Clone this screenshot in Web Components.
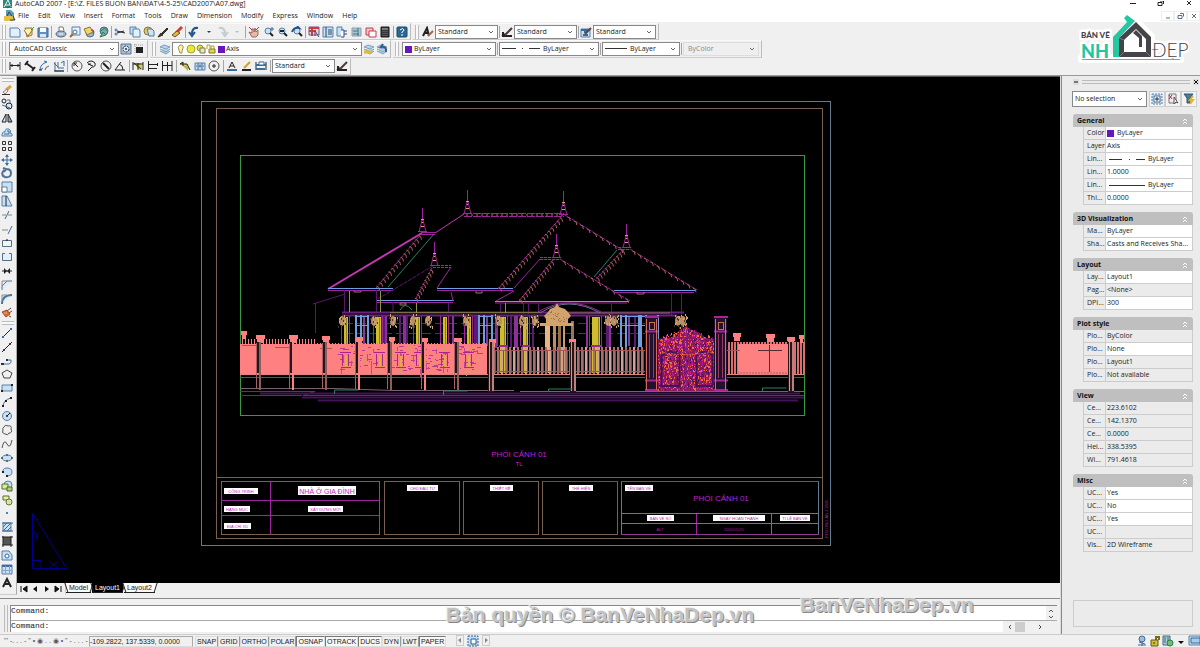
<!DOCTYPE html>
<html lang="vi">
<head>
<meta charset="utf-8">
<title>AutoCAD 2007 - A07.dwg</title>
<style>
html,body{margin:0;height:100%;background:#f0f0f0}
body{font:7px/9px "Open Sans","Noto Sans",sans-serif;color:#222}
</style>
</head>
<body>
<cad-app></cad-app>
<script>
const define=(name,css,html)=>customElements.define(name,class extends HTMLElement{
  connectedCallback(){
    if(this.shadowRoot)return;
    const root=this.attachShadow({mode:'open'});
    root.innerHTML=`<style>*{box-sizing:border-box}button{font:inherit;color:inherit;margin:0}svg{display:block}${css}</style>`+(typeof html==='function'?html(this):html);
  }
});

/* icon artwork on a 12 x 12 grid */
const B='stroke="#3f6b9c"',K='stroke="#222"',F='fill="#c9dff2" stroke="#5480ab"';
const lens=`<circle cx="6" cy="5" r="3" ${F}/><path d="M8 7l3 3" ${K} stroke-width="2"/>`;
const dimEnds=`<path d="M1 2v8M11 2v8" ${K}/>`;
const layers='<path d="M1 4l4-2 6 2-4 2zM1 6l6 3 4-3M1 8l6 3 4-3" fill="#b8d4ec" stroke="#7c9ebf"/>';
const ICON={
new:'<path d="M1 2h8l2 2v7H1z" fill="#e2f0fb" stroke="#5480ab"/>',
open:'<path d="M2 2h7v7l-5 2z" fill="#f0d98a" stroke="#9a7b30"/><path d="M1 4l4 6 5-7" fill="#fff3bd" stroke="#8b7336"/><path d="M8 4l3-3" stroke="#3c9a55"/>',
save:'<path d="M1 2h10v9H1z" fill="#5f91c4" stroke="#40658e"/><path d="M3 2h6v4H3z" fill="#fff"/><path d="M3 8h6v3H3z" fill="#dce8f4"/>',
print:'<path d="M4 5V1h4l1 4" fill="#fff" stroke="#777"/><ellipse cx="6" cy="8" rx="5" ry="3" fill="#9fb3cb" stroke="#52637d"/><path d="M4 8h4" stroke="#fff"/>',
preview:'<path d="M3 1h8v8H3z" fill="#e7f2fb" stroke="#5480ab"/><circle cx="6" cy="6" r="2" fill="#fff" stroke="#476b93"/><path d="M4 8l-3 3" stroke="#9a6a3a" stroke-width="2"/>',
publish:'<circle cx="7" cy="7" r="4" fill="#9cb9cf" stroke="#49708c"/><path d="M1 3l6-2 3 5-6 3z" fill="#eed66b" stroke="#8e7430"/><path d="M8 4l3 1-1 3" stroke="#bd4a45" fill="none"/>',
dwf:'<circle cx="7" cy="5" r="4" fill="#78a8c4" stroke="#416c8b"/><path d="M4 5q4-5 6 0M3 11l3-5 3 3z" fill="#73b184" stroke="#367b55"/>',
cut:`<path d="M3 5l8 2M3 7l7-2" ${K}/><circle cx="2" cy="4" r="1" fill="none" ${B}/><circle cx="2" cy="8" r="1" fill="none" ${B}/>`,
copy:`<path d="M1 1h6v7H1z" ${F}/><path d="M4 3h6l1 2v6H4z" fill="#e3f1fc" stroke="#5480ab"/>`,
paste:'<circle cx="5" cy="5" r="4" fill="#e5c968" stroke="#817342"/><path d="M4 3h5l2 2v5H6z" fill="#cfe3ef" stroke="#4b7c9d"/>',
match:'<path d="M1 11l3-4 2 2zM5 7l5-5 1 1-5 5z" fill="#4a3a31" stroke="#312923"/>',
editor:'<path d="M5 7l6-6" stroke="#c94139" stroke-width="3"/><path d="M1 9l5-4 3 2-5 4z" fill="#e2b83e" stroke="#725221"/>',
undo:'<path d="M10 2Q4 1 4 8M1 6l3 4 3-4" fill="none" stroke="#24558a" stroke-width="2"/>',
redo:'<path d="M2 2q6-1 6 6M5 6l3 4 3-4" fill="none" stroke="#c5cbd1" stroke-width="2"/>',
dot:'<path d="M4 5h4L6 7z" fill="#173b83"/>',dotg:'<path d="M4 5h4L6 7z" fill="#bbb"/>',arrow:'<path d="M3 6h6L6 9z" fill="#111"/>',
pan:'<path d="M4 11L1 6l3 1V3h2v3l1-4 1 4 2-2v5l-2 2z" fill="#e8b8a7" stroke="#986d6a"/><path d="M1 1l3 3M11 1L8 4" stroke="#b1323b"/>',
zoom:lens+'<path d="M10 1v4M8 3h4" stroke="#47698c"/>',
zoomw:lens+'<path d="M4 5h4" stroke="#222" stroke-width="2"/>',
zoomp:lens+'<path d="M1 6Q3 1 8 2L6 0" fill="none" stroke="#24558a" stroke-width="2"/>',
props:'<path d="M1 1h10v8H1z" fill="#e9dbe1" stroke="#765575"/><path d="M1 2h10M1 5h7M4 1v9" stroke="#c83d46" stroke-width="2"/><path d="M7 5l4 6M7 5v5" stroke="#344e82"/>',
center:`<path d="M1 1h10v10H1z" ${F}/><path d="M4 1v10M6 4h4M6 6h4M6 8h4" stroke="#274769"/>`,
palette:`<path d="M1 1h5v9H1z" ${F}/><path d="M5 4h3v7H5M8 5h3M8 8h3" stroke="#284e7d" fill="#fff"/>`,
sheet:'<path d="M2 2h9v8H2z" fill="#a9c9cf" stroke="#8aa0ad"/><path d="M3 5h5M3 8h6M8 2v8" stroke="#4c7186"/>',
markup:'<path d="M1 2h7v7H1z" fill="#f4c5c8" stroke="#c43c4b"/><path d="M4 5h7v6H4z" fill="#fff" stroke="#c43c4b"/>',
calc:'<path d="M2 1h8v10H2z" fill="#35383b" stroke="#191919"/><path d="M3 3h6" stroke="#adc8b4"/><path d="M4 5v5M6 5v5M8 5v5" stroke="#b55" stroke-dasharray="1"/>',
help:'<rect x="1" y="1" width="10" height="10" rx="1" fill="#296796" stroke="#184869"/><path d="M4 4q3-3 4 0 0 1-2 2v1M6 8v2" fill="none" stroke="#fff"/>',
text:'<path d="M1 10l4-8 2 8M3 7h3" fill="none" stroke="#222" stroke-width="2"/><path d="M6 10l5-5" stroke="#9a694d" stroke-width="2"/>',
dimstyle:'<path d="M1 10h10M1 10l3-2M2 6v4" stroke="#222" stroke-width="2"/><path d="M4 9l7-7" stroke="#4d3a34" stroke-width="2"/>',
tablestyle:`<path d="M1 3h9v8H1z" ${F}/><path d="M1 4h9M3 9h5M4 6h3" ${B} stroke-width="2"/><path d="M5 8l6-6" stroke="#5d4840" stroke-width="2"/>`,
gear:'<path d="M1 1h10v10H1z" fill="#a8c1dc" stroke="#5e7790"/><circle cx="6" cy="6" r="3" fill="#dce9f5" stroke="#333" stroke-dasharray="2 1"/><circle cx="6" cy="6" r="1" fill="#333"/>',
workspace:'<path d="M1 2h10M2 1v10" stroke="#999" stroke-dasharray="1"/><path d="M3 4h7v6H3z" fill="#222"/>',
layers,layerp:layers+'<path d="M1 9h7" stroke="#e3b92e" stroke-width="3"/>',layerb:layers+'<path d="M10 9Q11 3 5 4l2-3" fill="none" stroke="#315d92" stroke-width="2"/>',
bulb:'<path d="M4 7Q2 4 5 2q4 0 3 3L7 8v2H5z" fill="#fff6a3" stroke="#9b9156"/>',
sun:'<circle cx="6" cy="6" r="4" fill="#e9e83b" stroke="#a4a42f"/>',
vp:'<circle cx="5" cy="5" r="3" fill="#e7e33a" stroke="#908b33"/><path d="M5 5h5v5H5z" fill="#eee99a" stroke="#777"/>',
lock:'<path d="M2 6V2h3v3M6 6V3h3v4" fill="none" stroke="#aaa12b"/><path d="M4 6h6v4H4z" fill="#dfd452" stroke="#8a7a25"/>',
violet:'<path d="M3 3h7v7H3z" fill="#6616ba"/>',
dlin:dimEnds+`<path d="M1 5.500h10M3 4v3M9 4v3" fill="none" ${K}/>`,
dali:`<path d="M2 3l8 6M1 5l3-4M8 11l3-4" ${K} stroke-width="2"/>`,
darc:`<path d="M2 10Q2 4 9 2M2 10l3-2M9 2L6 1M7 10q0-3 4-4" fill="none" ${B} stroke-width="1"/><path d="M1 10h3" ${K}/>`,
dord:`<path d="M2 2v9h9M5 2v6h6M1 3l4 4M8 3l3-2v5" fill="none" ${B}/><path d="M1 11h10" ${K}/>`,
drad:`<circle cx="6" cy="6" r="5" fill="none" stroke="#555"/><path d="M3 3l4 4M3 6V3h3" ${K} fill="none"/>`,
djog:`<path d="M2 3q4-4 8 0 1 4-3 4l-4 4M6 4H3l5 2" fill="none" ${K}/>`,
ddia:`<circle cx="6" cy="6" r="5" fill="none" stroke="#555"/><path d="M3 3l6 6" ${K} stroke-width="2"/>`,
dang:`<path d="M11 10H1l6-8M5 4q4 1 4 6" fill="none" ${K}/>`,
dquick:'<path d="M2 3h7l2 7-5-1z" fill="#d2d03a"/>'+dimEnds+'<path d="M1 4h10M6 3v7M2 3l7 6" stroke="#222"/>',
dbase:`<path d="M1.500 1v10M2 4.500h8M2 8.500h8M10.500 3v3" fill="none" ${K}/>`,
dcont:`<path d="M1.500 1v10M6.500 2v9M11 1v10M1 5.500h10" ${K}/>`,
dlead:'<path d="M1 4h7l3 6M1 4l3-2v4" fill="#dec73b" stroke="#222"/><path d="M4 6l5 5V6z" fill="#b2b644"/>',
dtol:`<path d="M1 3h10v7H1z" ${F}/><path d="M4 3v7M8 3v7M2 6h1M9 6h1" ${B}/><circle cx="6" cy="6" r="1" ${B}/>`,
dcen:'<circle cx="6" cy="6" r="5" fill="none" stroke="#555"/><path d="M4 6h4M6 4v4" stroke="#222"/>',
dedit:`<path d="M1 10h10" ${B} stroke-width="2"/><path d="M3 8l3-6 3 6M4 6h4" fill="none" ${K}/>`,
dtedit:'<path d="M1 10h9" stroke="#222" stroke-width="2"/><path d="M3 8l6-6" stroke="#d79a28" stroke-width="2"/>',
dupd:dimEnds+`<path d="M1 5h10M1 9h9" ${B} stroke-width="2"/><path d="M4 2h5v3H4z" ${B} fill="#fff"/>`,
erase:'<path d="M5 6l5-4" stroke="#dba24d" stroke-width="3"/><path d="M2 8l4-3 1 2-3 3z" fill="#f4ede5" stroke="#a57a70"/><path d="M1 10.500h8" stroke="#333"/>',
ccopy:`<circle cx="3" cy="3" r="2" fill="none" ${K}/><circle cx="8" cy="8" r="3" fill="#dce8ef" ${K}/><path d="M6 2h3v3M1 7l8 3" fill="none" ${B}/>`,
mirror:`<path d="M1 10l4-8v8z" fill="#dbe7ee" ${K}/><path d="M11 10L7 2v8z" fill="#93a8bb" ${K}/>`,
offset:`<path d="M1 8q1-3 3-2 0-4 4-3 3 2 1 4l2 1v2H1z" ${F}/><path d="M3 8h5V5H6" fill="none" ${B}/>`,
array:'<path d="M1.500 1.500h3v3h-3zM7.500 1.500h3v3h-3zM1.500 7.500h3v3h-3zM7.500 7.500h3v3h-3z" fill="#f5f5f5" stroke="#333"/>',
move:`<path d="M6 1v10M1 6h10" ${B}/><path d="M6 0l2 3H4zM6 12l2-3H4zM0 6l3-2v4zM12 6L9 4v4z" fill="#3f6b9c"/>`,
rotate:'<path d="M3 3q-4 5 1 7 6 1 6-4 0-4-5-4M2 1l3 1-2 3" fill="none" stroke="#4d7198" stroke-width="2"/>',
scale:`<path d="M1 1h10v10H1z" ${F}/><path d="M1 6h5v5H1z" fill="#fff" stroke="#638097"/>`,
stretch:`<path d="M1 1h5l5 10H1z" ${F}/><path d="M5 1v10" ${K}/>`,
trim:`<path d="M1 6h4M7 6h4" stroke="#888"/><path d="M4 10l4-8" ${B}/>`,extend:`<path d="M1 7h6" stroke="#888"/><path d="M7 11l4-8" ${B}/>`,
breakp:'<path d="M1.500 3.500h9v6h-9z" fill="#f4f4f0" stroke="#566f88"/><path d="M6 2v2" stroke="#111"/>',brk:'<path d="M4 2.500H1.500v7h9v-7H8" fill="#e6eff7" stroke="#566f88"/>',
join:'<path d="M1 6h10" stroke="#222"/><path d="M3 3l3 3-3 3zM9 3L6 6l3 3z" fill="#222"/>',
chamfer:'<path d="M1 11V7l5-5h5" fill="#dcebf7" stroke="#4b759f"/><path d="M1 7V2h5" fill="none" stroke="#888"/>',
fillet:'<path d="M1 11Q1 2 11 2" fill="#dcebf7" stroke="#4b759f" stroke-width="2"/><path d="M1 7V2h5" fill="none" stroke="#888"/>',
explode:'<path d="M1 5l5-2 3 4-4 3z" fill="#d2703a" stroke="#b54731"/><path d="M6 4l4-3M8 6l3-2M8 9l2 1" stroke="#8a3c27"/><path d="M3 6h3" stroke="#f0b05a"/>',
line:`<path d="M2 10l8-8" ${K}/><path d="M1 10h2M9 2h2" ${B} stroke-width="2"/>`,xline:`<path d="M1 11L11 1" ${K}/><circle cx="3" cy="9" r="1" fill="#222"/><circle cx="9" cy="3" r="1" fill="#222"/>`,
pline:'<path d="M1 9h7q3-1 2-4H6M1 8v2" fill="none" stroke="#47719b"/><path d="M0 9h3M5 5h2" stroke="#234" stroke-width="2"/>',
polygon:'<path d="M6 2l5 3-2 5H3L1 5z" fill="#eef0f1" stroke="#454545"/>',rect:`<path d="M1 3h10v6H1z" ${F}/><path d="M1 8v2M11 2v2" ${K} stroke-width="2"/>`,
arc:`<path d="M2 11Q2 4 10 2" fill="none" ${B}/><path d="M1 10h2M4 5h2M9 2h2" ${K} stroke-width="2"/>`,
circle:`<circle cx="6" cy="6" r="4.500" ${F}/><path d="M6 6l3-3" ${K}/><circle cx="6" cy="6" r="1" fill="#222"/>`,
cloud:'<path d="M3 3q1-3 4-1 4-1 3 3 2 4-2 4-1 3-4 1-4-1-2-4-1-2 1-3z" fill="#f0f0f0" stroke="#555"/>',
spline:'<path d="M1 10Q3 0 6 6t5-4" fill="none" stroke="#555"/>',ellipse:`<ellipse cx="6" cy="6" rx="5" ry="3" ${F}/><path d="M6 2v2M6 8v2M1 5v2M11 5v2" ${K}/>`,
earc:`<path d="M2 7Q1 2 6 2t5 4-5 4" ${F}/><path d="M1 6h2M5 10h2" ${K} stroke-width="2"/>`,
insert:'<circle cx="7" cy="5" r="4" fill="#cfe0ed" stroke="#5480ab"/><path d="M1 4h6v5H1z" fill="#dce99d" stroke="#55752e"/><path d="M6 7h5v4H6z" fill="#b3cd7b" stroke="#48682b"/>',
block:'<path d="M2 2h6v4H2z" fill="#e9edac" stroke="#58702b"/><circle cx="8" cy="8" r="3" fill="#d9e5a4" stroke="#56783d"/>',
point:'<circle cx="6" cy="6" r="1" fill="#245b8b"/>',hatch:`<path d="M2 2h8v8H2z" ${F}/><path d="M2 6l4-4M2 10l8-8M6 10l4-4M1 2h11M1 10h11" ${B}/>`,
gradient:'<path d="M2 2h8v8H2z" fill="#555"/><path d="M1 2h11M1 10h11M2 1v11M10 1v11" stroke="#222"/>',
region:`<path d="M1 2h7l3 4v5H1z" ${F}/><circle cx="6" cy="7" r="2" fill="#f8f8f8" ${B}/>`,
table:`<path d="M1 2h10v9H1z" ${F}/><path d="M1 3h10" ${B} stroke-width="2"/><path d="M1 7.500h10M4.500 3v8M8.500 3v8" stroke="#82a5cb"/>`,
mtext:'<path d="M2 10l4-8 4 8M4 7h4" fill="none" stroke="#222" stroke-width="2"/>',
first:'<path d="M4 3v6M10 3v6L6 6z" fill="#111" stroke="#111"/>',prev:'<path d="M8 3v6L4 6z" fill="#111"/>',next:'<path d="M4 3v6l4-3z" fill="#111"/>',last:'<path d="M8 3v6M2 3v6l4-3z" fill="#111" stroke="#111"/>',
qplus:`<path d="M1 1h10v10H1z" ${F} stroke-dasharray="2 1"/><path d="M3 3h6v6H3z" fill="#fff" ${B}/><path d="M6 4v4M4 6h4" ${K}/>`,
qsel:'<path d="M2 1h7v9H2z" fill="#eee" stroke="#777"/><path d="M2 2l3 4M5 2L2 6" stroke="#b82a3e"/><path d="M7 4v7l2-2 2 1z" fill="#fff" stroke="#555"/>',
qfilter:'<path d="M1 1h9L7 5v5H4V5z" fill="#447aa4" stroke="#315470"/><path d="M10 3L7 7h3l-3 4" fill="none" stroke="#e3b529" stroke-width="2"/>',
app:'<path d="M1 0h9v8H1z" fill="#2d8a78"/><path d="M2 7l4-7 3 7M3 5h5" fill="none" stroke="#e7f6ee"/><path d="M5 8l5-3" stroke="#28567a"/>',
dwg:'<path d="M2 0h5l3 3v7H2z" fill="#5d9cbd"/><path d="M0 6h9v5H0z" fill="#e1c247"/><path d="M3 6l2-4 3 4M9 6l2 4H6" fill="none" stroke="#344"/>',
comm:'<circle cx="6" cy="4" r="3" fill="#9ebddc" stroke="#436b98"/><path d="M2 10h8M6 6v5M3 7l6 2" stroke="#466b9a"/>',
unlock:'<path d="M7 6V2h3v3" fill="none" stroke="#786c1c" stroke-width="2"/><path d="M2 5h7v6H2z" fill="#d1be31" stroke="#63591b"/><path d="M5 7v2" stroke="#333"/>',
trusted:'<path d="M1 1h7v9H1z" fill="#b3cfdf" stroke="#3e6978"/><circle cx="8" cy="8" r="3" fill="#74bd72" stroke="#298041"/><path d="M3 2v6M6 2v4" stroke="#367"/>',
screen:`<path d="M1 1h11v9H1z" ${F}/><path d="M3 3h9v5H3z" fill="#a8cdec" ${B}/>`,
maxvp:'<path d="M1 1h10v10H1z" fill="#c1dff5" stroke="#345f8b" stroke-dasharray="2 1"/><path d="M4 4h5v5H4z" fill="#fff" stroke="#24588d"/>'
};
define('cad-icon',':host{display:block;flex:none;width:12px;height:12px}',el=>`<svg width="12" height="12" viewBox="0 0 12 12" fill="none" aria-hidden="true">${ICON[el.getAttribute('name')]||''}</svg>`);
define('cad-tool',':host{display:block;flex:none}button{display:block;border:0;padding:0;background:none}',el=>`<button type="button" aria-label="${el.getAttribute('name')}"><cad-icon name="${el.getAttribute('name')}"></cad-icon></button>`);
define('cad-sep',':host{display:block;flex:none;width:1px;height:12px;background:#a5a5a5}','');
define('cad-group',':host{display:flex;align-items:center;justify-content:space-between;flex:none}','<slot></slot>');
define('cad-toolbar',':host{display:flex;align-items:center;padding:0 2px;border-right:1px solid #bbb;border-bottom:1px solid #ccc;border-top:1px solid #fafafa}i{flex:none;width:4px;height:14px;margin-right:3px;border:solid #bbb;border-width:0 1px;background:#fafafa}div{display:flex;align-items:center;gap:1px}','<i></i><div><slot></slot></div>');

/* drop-down with an optional swatch or line sample before its value */
define('cad-select',`:host{display:block;position:relative;flex:none;height:14px;font-size:7px}
select{appearance:none;display:block;width:100%;height:100%;margin:0;padding:0 10px 0 var(--pad,4px);border:1px solid #888;border-radius:0;background:#fff;color:#222;font:inherit;line-height:12px;opacity:1}
:host([off]) select{color:#888;background:#efefef;border-color:#ddd}
svg{position:absolute;right:3px;top:50%;margin-top:-2px;pointer-events:none}
span{position:absolute;left:3px;top:0;bottom:0;display:flex;align-items:center;pointer-events:none}`,
el=>`<select aria-label="${el.getAttribute('label')}" ${el.hasAttribute('off')?'disabled':''}><option>${el.getAttribute('value')}</option></select><span><slot></slot></span><svg width="7" height="5" fill="none" stroke="#666"><path d="M1 1l2 2 2-2"/></svg>`);

const tools=s=>s.split(' ').map(n=>n==='|'?'<cad-sep></cad-sep>':`<cad-tool name="${n}"></cad-tool>`).join('');

define('cad-title',`:host{display:flex;justify-content:space-between;height:10px;background:#fff;overflow:hidden;line-height:7px;font-size:7px}
div{display:flex;gap:1px;padding-left:2px}.w{gap:16px;padding-right:5px}button{border:0;background:none;padding:0}`,
`<div><cad-icon name="app"></cad-icon><span>AutoCAD 2007 - [E:\\Z. FILES BUON BAN\\ĐAT\\4-5-25\\CAD2007\\A07.dwg]</span></div>
<div class="w"><button aria-label="Minimize"><svg width="12" height="8" stroke="#222"><path d="M3 2.500h6"/></svg></button><button aria-label="Restore"><svg width="12" height="8" stroke="#222" fill="none"><path d="M3 1.500h4v3H3zM5 0h3.500v3"/></svg></button><button aria-label="Close"><svg width="12" height="8" stroke="#222"><path d="M4 0l4 4M8 0L4 4"/></svg></button></div>`);

define('cad-menu',`:host{display:flex;justify-content:space-between;height:12px;background:#fff;line-height:12px}
nav{display:flex;padding-left:4px}a{color:#222;text-decoration:none;margin-right:9px}cad-icon{margin-right:2px}
div{display:flex}button{width:13px;height:10px;margin-top:1px;padding:0;border:1px solid #eee;background:#fff}`,
`<nav><cad-icon name="dwg"></cad-icon>${'File Edit View Insert Format Tools Draw Dimension Modify Express Window Help'.split(' ').map(t=>`<a href="#">${t}</a>`).join('')}</nav>
<div><button aria-label="Minimize drawing"><svg width="11" height="8" stroke="#56728d"><path d="M4 6h4"/></svg></button><button aria-label="Restore drawing"><svg width="11" height="8" stroke="#56728d" fill="none"><path d="M3 3.500h4v3H3zM5 1.500h3.500v3"/></svg></button><button aria-label="Close drawing"><svg width="11" height="8" stroke="#56728d"><path d="M4 2l4 4M8 2L4 6"/></svg></button></div>`);

define('cad-toolbars',`:host{display:grid;grid-auto-rows:minmax(0,1fr);box-sizing:border-box;height:54px;padding-top:1px;background:#f0f0f0;border-bottom:1px solid #999}
.r{display:flex;gap:2px}.std{width:63px;--pad:2px}.layer cad-icon{margin-right:-2px}`,
`<div class="r"><cad-toolbar><cad-group style="width:399px">${tools('new open save | print preview publish dwf | cut copy paste match editor | undo dot redo dotg | pan zoom zoomw zoomp | props center palette sheet markup calc | help')}</cad-group></cad-toolbar>
<cad-toolbar><cad-tool name="text"></cad-tool><cad-select class="std" label="Text style" value="Standard"></cad-select><cad-sep></cad-sep><cad-tool name="dimstyle"></cad-tool><cad-select class="std" label="Dimension style" value="Standard"></cad-select><cad-sep></cad-sep><cad-tool name="tablestyle"></cad-tool><cad-select class="std" label="Table style" value="Standard"></cad-select></cad-toolbar></div>
<div class="r"><cad-toolbar><cad-select style="width:110px" label="Workspace" value="AutoCAD Classic"></cad-select><cad-tool name="gear"></cad-tool><cad-tool name="workspace"></cad-tool></cad-toolbar>
<cad-toolbar><cad-tool name="layers"></cad-tool><cad-select class="layer" style="width:190px;--pad:53px" label="Layer" value="Axis"><cad-icon name="bulb"></cad-icon><cad-icon name="sun"></cad-icon><cad-icon name="vp"></cad-icon><cad-icon name="lock"></cad-icon><cad-icon name="violet"></cad-icon></cad-select><cad-tool name="layerp"></cad-tool><cad-tool name="layerb"></cad-tool></cad-toolbar>
<cad-toolbar><cad-select style="width:94px;--pad:11px" label="Color" value="ByLayer"><svg width="8" height="8"><path d="M0 1h7v7H0z" fill="#6616ba"/></svg></cad-select><cad-sep></cad-sep><cad-select style="width:100px;--pad:43px" label="Linetype" value="ByLayer"><svg width="40" height="3" stroke="#333"><path d="M0 1.500h14M20 1.500h1M27 1.500h11"/></svg></cad-select><cad-sep></cad-sep><cad-select style="width:78px;--pad:27px" label="Lineweight" value="ByLayer"><svg width="24" height="3" stroke="#333"><path d="M0 1.500h22"/></svg></cad-select><cad-sep></cad-sep><cad-select off style="width:76px" label="Plot style" value="ByColor"></cad-select></cad-toolbar></div>
<div class="r"><cad-toolbar><cad-group style="width:262px">${tools('dlin dali darc dord | drad djog ddia dang | dquick dbase dcont | dlead dtol dcen | dedit dtedit dupd |')}</cad-group><cad-select class="std" label="Current dimension style" value="Standard"></cad-select><cad-tool name="dimstyle"></cad-tool></cad-toolbar></div>`);

define('cad-strip',`:host{display:flex;flex-direction:column;box-sizing:border-box;width:17px;flex:none;padding-bottom:5px;background:#f0f0f0;border-right:1px solid #aaa;border-bottom:1px solid #ccc}
div{display:flex;flex-direction:column;align-items:center;justify-content:space-between;padding-right:2px}
.a{flex:17}.b{flex:19}i{flex:none;height:4px;margin:2px;border:solid #bbb;border-width:1px 0;background:#fafafa}`,
`<i></i><div class="a">${tools('erase ccopy mirror offset array move rotate scale stretch trim extend breakp brk join chamfer fillet explode')}</div><i></i><div class="b">${tools('line xline pline polygon rect arc circle cloud spline ellipse earc insert block point hatch gradient region table mtext')}</div>`);

/* ---- the sheet in the drawing area ---- */
function sheet(){
  let seed=7;const rnd=()=>(seed=(seed*16807)%2147483647)/2147483647;
  const P=(d,c,w=1,x='')=>`<path d="${d}" stroke="${c}" stroke-width="${w}" fill="none" ${x}/>`;
  const R=(x,y,w,h,c)=>`<rect x="${x}" y="${y}" width="${w}" height="${h}" fill="${c}"/>`;
  const O=(x,y,w,h,c)=>`<rect x="${x+.5}" y="${y+.5}" width="${w}" height="${h}" fill="none" stroke="${c}"/>`;
  const T=(x,y,s,t,c='#c223c8',a='start')=>`<text x="${x}" y="${y}" font-size="${s}" fill="${c}" text-anchor="${a}">${t}</text>`;
  const mg='#a0249c',pu='#5c1670',br='#77604f',sl='#617a92',sa='#ff8080',ye='#d0bc2c',ta='#d2a36d',bl='#6f9fe0',gr='#2a8068';
  const tiles=(x1,y1,x2,y2,n)=>{let d='';for(let i=0;i<n;i++){const t=(i+.5)/n,x=x1+(x2-x1)*t,y=y1+(y2-y1)*t;d+=`M${x-1} ${y}q3 0 3 4`}
    return P(`M${x1} ${y1}L${x2} ${y2}`,mg,1,'stroke-dasharray="3 1"')+P(d,'#b0605c',1)};
  const spire=(x,y)=>P(`M${x+.5} ${y-24}v13`,mg)+P(`M${x-1} ${y-12.5}h3M${x-1} ${y-9.500}h3M${x-1} ${y-5.500}h3`,ta)+P(`M${x} ${y-12}l-2 8-1 4M${x+1} ${y-12}l2 8 1 4M${x-4} ${y-.5}h9`,mg);
  let g='';
  g+=O(201,101,629,444,sl)+O(216,108,606,430,br)+O(240,155,564,260,'#389a40');
  /* roofs */
  g+=P('M328 289L422 233','#c237ae',2)+P('M421 232.500h14M421 234.500h14',mg)+P('M435 233L464 214','#c237ae',1)+P('M464 213.500h100M464 216.500h100',mg,1,'stroke-dasharray="8 1"')+P('M466 215h98','#c06c5c',1,'stroke-dasharray="2 3"');
  g+=tiles(421,234,376,288,15)+P('M434 234L388 287',gr)+P('M328 288.500h65M376 300.500h78M437 288.500h76M495 301.500h134M614 290.500h82',bl)+P('M328 290.500h65M377 302.500h76M437 290.500h76M495 303h132M614 292.500h80',mg);
  g+=P('M433 266L376 300',pu,1,'stroke-dasharray="4 1"')+P('M433 265.500h18M433 267.500h18',mg,1,'stroke-dasharray="3 1"')+tiles(432,268,415,300,9)+P('M451 267L437 288M451 292l2 9',mg);
  g+=tiles(562,216,498,289,22)+tiles(565,215,624,251,9)+P('M540 257.500h20M540 259.500h20M618 247.500h12M618 249.500h12',mg,1,'stroke-dasharray="3 1"')+P('M540 259l-26 29M514 291l-18 10',mg)+tiles(553,260,519,301,13)+tiles(560,259,630,301,10)+P('M617 250l-23 27',gr)+tiles(624,249,596,279,10)+tiles(630,249,697,290,11);
  [[422,232],[467,214],[434,266],[563,215],[556,258],[626,248]].forEach(a=>g+=spire(...a));
  g+=P('M354 291v1h7v-1M476 291v2h6v-2M637 292v2h7v-2M400 303h6v2h-6z','#9a7660');
  /* wall behind the columns */
  g+=P('M313 304l32-10M315.500 303v30M344.500 290v23M376.500 290v23M380.500 290v12M393 302v10M448.500 303v9M500.500 303v10M505.500 303v10M523.500 304v10M528.500 304v10M538.500 303v10M611.500 304v10M671.500 292v24M681.500 292v24',pu)+P('M342 312.500h342M342 315.500h335','#6b2180',2)+P('M390 312.500h150M560 313h110','#7c7048')+P('M349.500 291v21M380.500 291v21M416.500 303v10M505.500 303v10','#8f9640')+P('M540 313q28-18 60 0',sl)+P('M538 312q30-18 63 0',mg)+P('M400 310q5-9 12 0',gr);
  for(let x=344;x<650;x+=13)g+=P(`M${x} 323.500h9M${x} 333.500h9`,'#33404f');
  [381,385,399,403,406,452,474,495,510,514,532,586,606,609,634].forEach((x,i)=>g+=R(x,316,i%3?2:4,32,i%2?'#8d3099':'#5b1a70'));
  [[344,4],[376,5],[416,4],[443,4],[467,4],[500,6],[523,5],[592,8]].forEach(a=>g+=R(a[0],317,a[1],56,ye)+R(a[0]+a[1]-2,318,1,28,'#8d7b22')+R(a[0]-1,345,a[1]+2,2,mg)+P(`M${a[0]-2.5} 316v30M${a[0]+a[1]+1.5} 316v57`,mg));
  [[355,13],[478,14],[620,19],[640,18]].forEach(a=>{[0,5,a[1]-1].forEach(o=>g+=R(a[0]+o,315,2,32,bl));g+=R(a[0]+8,316,2,30,'#7f3e98')+P(`M${a[0]} 316.500h${a[1]}M${a[0]} 325.500h${a[1]}`,bl)});
  [342,374,393,413,428,466,499,522,535,608,614,678,683].forEach(x=>{g+=`<ellipse cx="${x}" cy="321" rx="3" ry="5" fill="#b98d63"/>`;for(let i=0;i<18;i++)g+=R(Math.round(x-4+rnd()*8),Math.round(314+rnd()*13),1,2,i%3?ta:'#4b3728')});
  g+=R(545,324,5,49,'#eab67f')+R(553,324,3,49,'#c18b63')+R(558,322,3,51,'#987048')+R(563,322,2,51,'#c79a70')+R(571,321,3,52,'#9b7264')+R(540,323,33,3,ta)+`<path d="M546 325v-6l-2-3 4-4 2-3 5-2 2-4 2 4 6 2 3 3 3 4-3 3v6l-12-1z" fill="${ta}"/>`;
  for(let i=0;i<26;i++)g+=R(Math.round(547+rnd()*20),Math.round(311+rnd()*12),1,1,'#9d744a');
  /* fence: solid panels, open pickets, piers */
  g+=R(240,344,247,30,sa)+R(738,344,50,30,sa);
  for(let x=242;x<490;x+=3)g+=R(x,x<315?339:343,1,5,sa);
  for(let x=728;x<804;x+=3)g+=R(x,342,2,32,'#d96f70');
  for(let x=489;x<646;x+=4)g+=R(x,347,2,27,x%3?'#a76d70':'#d0a09b')+R(x+2,350,1,23,'#7a4662');
  g+=R(738,344,50,28,sa);
  g+=P('M489 350.500h156M489 371.500h156M727 350.500h13M242 345.500h18M275 347.500h16M320 348.500h12','#a4555a');
  for(let i=0;i<170;i++){const x=Math.round(338+rnd()*142),y=Math.round(345+rnd()*25);g+=rnd()>.5?R(x,y,1+Math.round(rnd()*5),1,'#bc3c94'):R(x,y,1,2+Math.round(rnd()*6),rnd()>.4?'#d99a66':'#bd48a0')}
  [345,379,400,419,444,468].forEach(x=>g+=P(`M${x-5} 352.500h11M${x-4} 367.500h10M${x-2.5} 354v12M${x+3.500} 354v12`,'#aa268d')+R(x,356,2,11,'#d8b23c'));
  g+=P('M240 374.500h407M727 374.500h77','#e18480')+P('M240 377.500h407M727 377.500h77','#7d4b3d')+P('M240 388.500h94l60 2h120M520 391.500h284','#7a6073');
  [[241,6,331],[256,9,335],[289,9,335],[322,8,336],[356,7,337],[389,6,337],[422,6,338],[454,8,338],[489,7,339],[569,7,339],[733,8,333],[766,9,334],[787,8,337],[799,5,335]].forEach(([x,w,y])=>g+=R(x,y,w,4,sa)+R(x+1,y+4,w-2,4,sa));
  [257,290,323,356,388,422,455].forEach((x,i)=>g+=R(x,342,2,31,'#241621')+R(x+2,342,2,48,i%2?sa:'#925c5b')+R(x-1,343,1,46,'#a86160'));
  [488,570,788].forEach(x=>g+=R(x,342,6,50,'#2a1519')+R(x+1,342,1,49,sa)+R(x+4,342,2,49,'#bd8179'));
  g+=P('M769.500 345v27M758 350.500h24','#542d33');
  /* ground */
  g+=P('M240 391.500h75l-12 4h501M242 395.500h60','#6c2a7c')+P('M260 393.500h540M302 397.500h502M318 400.500h480','#45115a',2)+P('M334.500 394v-4h24M443.500 395v-4h24M548.500 392v-3h24M762.500 391v-3h24',gr);
  /* gate */
  [645,714].forEach(x=>g+=R(x,318,13,73,'#27102c')+P(`M${x} 317h14M${x} 331.500h13M${x} 380.500h14M${x} 390h14`,'#a52497',2)+P(`M${x+1.5} 319v71M${x+11.500} 319v71`,'#d46b5f')+O(x+4,322,5,7,'#c27448')+P(`M${x+4.5} 334v44M${x+8.500} 334v44`,'#923f65'));
  g+=`<path d="M658 339l14-2 8-7 6-4 5 4 7 2 8 6 8 1v52h-56z" fill="#8c1a5a"/>`;
  for(let i=0;i<1300;i++){const x=Math.round(658+rnd()*55),c=Math.abs(x-686),y0=327+c*.36,y=Math.round(y0+rnd()*(389-y0));g+=R(x,y,1,1+Math.round(rnd()),['#cf227d','#ee6638','#b71c91','#ef7046','#471068'][Math.floor(rnd()*5)])}
  g+=P('M661.500 386v-30q9-8 18-1v31zM696.500 386v-30q9-8 16 0v30z','#45115a',2)+P('M686.500 330v60M689.500 334v56','#8c1c84')+P('M659 352q25 5 54 0','#e4664a',1,'stroke-dasharray="2 1"');
  g+=T(519,457,8,'PHỐI CẢNH 01',undefined,'middle')+T(519,466,6,'TL',undefined,'middle');
  /* title block */
  g+=P('M216 477.500h606',br)+O(221,481,158,53,br)+O(384,481,75,53,br)+O(463,481,75,53,br)+O(542,481,75,53,br)+O(621,481,197,53,'#8e3b92')+P('M542 481.500h76',mg)+P('M270.500 482v52M221 500.500h158M221 515.500h158M696.500 513v21',mg)+P('M621.500 482v52M622 513.500h196M622 523.500h196M771.500 514v20M818.500 482v52',sl);
  const L=(x,y,w,h,s,t)=>R(x,y,w,h,'#fff')+T(x+w/2,y+h-1,s,t,'#b728b4','middle');
  g+=L(224,488,34,6,4,'CÔNG TRÌNH')+L(224,506,26,6,4,'HẠNG MỤC')+L(224,523,27,6,4,'ĐỊA CHỈ XD')+L(298,486,58,9,7,'NHÀ Ở GIA ĐÌNH')+L(308,506,35,6,4,'XÂY DỰNG MỚI')+L(407,485,31,6,4,'CHỦ ĐẦU TƯ')+L(490,485,23,6,4,'THIẾT KẾ')+L(569,485,24,6,4,'THỂ HIỆN')+L(625,485,28,6,4,'TÊN BẢN VẼ')+L(647,515,27,6,4,'BẢN VẼ SỐ')+L(713,515,52,6,4,'NGÀY HOÀN THÀNH')+L(780,515,30,6,4,'TỈ LỆ BẢN VẼ');
  g+=T(721,501,8,'PHỐI CẢNH 01',undefined,'middle')+T(660,531,4,'A07',mg,'middle')+T(734,531,4,'20/05/2025',mg,'middle')+`<text transform="translate(828 538) rotate(-90)" font-size="4" fill="${mg}">PHƯƠNG ÁN 2 2025</text>`;
  /* paper-space axes */
  g+=P('M32.500 513v55.500h34zM33 560.500h8v8M49 561l9 7M58 561l-9 7M34 532l2 3 2-3M36.500 535v4','#00008c');
  return g;
}
define('cad-drawing',':host{display:block;flex:1;min-height:0;background:#000;position:relative;border-top:1px solid #555}svg{position:absolute;inset:0;width:100%;height:100%}text{font-family:"Liberation Sans",Arial,sans-serif}',()=>`<svg viewBox="17 77 1043 506">${sheet()}</svg>`);

define('cad-tabs',`:host{display:flex;align-items:stretch;height:12px;flex:none;background:#f0f0f0;font:7px/10px "Liberation Sans",Arial,sans-serif}
div{display:flex;border-right:1px solid #ccc}
nav{display:flex}a{position:relative;color:#222;text-decoration:none;height:10px;padding:0 3px;margin-right:1px;border-bottom:1px solid #222;background:#fafafa}
a::before,a::after{content:"";position:absolute;right:-1px;top:0;height:10px;border-right:1px solid #222;transform:skewX(-18deg)}a::before{right:auto;left:0;transform:skewX(18deg)}a[aria-current]{background:#000;color:#fff}`,
`<div>${tools('first prev next last')}</div><nav><a href="#">Model</a><a href="#" aria-current="page">Layout1</a><a href="#">Layout2</a></nav>`);

define('cad-command',`:host{display:flex;box-sizing:border-box;flex:none;height:39px;padding:10px 3px 2px 4px;background:linear-gradient(#f0f0f0 3px,#888 3px,#888 4px,#f0f0f0 4px)}
i{width:4px;border:solid #bbb;border-width:0 1px;margin-right:2px}
section{flex:1;display:grid;grid-template-rows:14px 12px;border:solid #888;border-width:1px 0 0 1px;background:#fff}
.row{display:flex;min-width:0;align-items:flex-start;font:8px/10px "Liberation Mono","Courier New",monospace}.row+.row{border-top:1px solid #aaa}
label{flex:none}input{flex:1;min-width:0;height:9px;border:0;padding:0;font:inherit;outline:0;background:none}output{flex:1}
.v,.h{background:#f0f0f0;align-self:stretch;overflow:hidden}.v{width:11px}.h{width:54px}`,
`<i></i><section><div class="row"><output>Command:</output><div class="v"><svg width="11" height="14" fill="none" stroke="#555"><path d="M3 6l2-2 2 2M3 10l2 2 2-2"/></svg></div></div>
<div class="row"><label for="c">Command:</label><input id="c"><div class="h"><svg width="54" height="12" fill="none" stroke="#444"><path d="M8 4L6 6l2 2M36 4l2 2-2 2"/><path d="M12 1h10v10H12z" fill="#cdcdcd" stroke="none"/></svg></div></div></section>`);

define('cad-section',`:host{display:block;margin-bottom:7px}h2{display:flex;justify-content:space-between;align-items:center;height:13px;margin:0;padding:0 4px;border-radius:3px 3px 0 0;background:#bfbfbf;font:bold 7px/13px "Open Sans","Noto Sans",sans-serif;color:#111}
table{width:calc(100% - 10px);margin-left:10px;border-collapse:separate;border-spacing:0;table-layout:fixed;border-left:1px solid #ccc}
th,td{height:13px;padding:0 1px;border:solid #ccc;border-width:0 1px 1px 0;font-weight:400;text-align:left;line-height:12px;overflow:hidden;white-space:nowrap}th{width:22px;padding-left:3px}td{background:#fff}td.ro{background:#ebebeb}td div{display:flex;align-items:center;gap:3px}`,
el=>`<h2>${el.getAttribute('head')}<svg width="7" height="8" fill="none" stroke="#fff"><path d="M1 4l2-2 2 2M1 7l2-2 2 2"/></svg></h2><table>${el.getAttribute('rows').split(';').map(r=>{let [a,b,o]=r.split('=');
const art={c:'<svg width="7" height="7"><path d="M0 0h7v7H0z" fill="#6616ba"/></svg>',d:'<svg width="38" height="3" stroke="#333"><path d="M2 1.500h13M22 1.500h1M29 1.500h9"/></svg>',l:'<svg width="38" height="3" stroke="#333"><path d="M2 1.500h36"/></svg>'}[o]||'';
return `<tr><th scope="row">${a}</th><td class="${o==='r'?'ro':''}"><div>${art}<span>${b.replace('<','&lt;')}</span></div></td></tr>`}).join('')}</table>`);

define('cad-properties',`:host{display:flex;flex-direction:column;width:139px;flex:none;background:#ebebeb;border-left:1px solid #888;padding:2px 7px 7px 11px;box-sizing:border-box}
.g{display:flex;align-items:center;gap:3px;height:8px;margin-right:-6px}.g i{flex:1;height:4px;border:solid #bbb;border-width:1px 0}.g button{width:6px;height:6px;padding:0;border:0;background:#ddd}
.q{display:flex;align-items:center;gap:2px;margin:5px -4px 7px -1px}.q cad-select{flex:1;height:16px}.q div{display:flex}.q cad-tool{border:1px solid #ccc;padding:1px;background:#f3f3f3}
.info{height:27px;margin-top:auto;border:1px solid #ccc}`,
`<div class="g"><button aria-label="Auto-hide"><svg width="6" height="6" stroke="#111"><path d="M1 3h4"/></svg></button><i></i><button aria-label="Close"><svg width="6" height="6" stroke="#111"><path d="M1 1l4 4M5 1L1 5"/></svg></button></div>
<div class="q"><cad-select label="Selection" value="No selection" style="--pad:2px"></cad-select><div>${tools('qplus qsel qfilter')}</div></div>
<cad-section head="General" rows="Color=ByLayer=c;Layer=Axis;Lin...=ByLayer=d;Lin...=1.0000;Lin...=ByLayer=l;Thi...=0.0000"></cad-section>
<cad-section head="3D Visualization" rows="Ma...=ByLayer;Sha...=Casts and Receives Sha..."></cad-section>
<cad-section head="Layout" rows="Lay...=Layout1;Pag...=<None>=r;DPI...=300"></cad-section>
<cad-section head="Plot style" rows="Plo...=ByColor=r;Plo...=None;Plo...=Layout1=r;Plo...=Not available=r"></cad-section>
<cad-section head="View" rows="Ce...=223.6102=r;Ce...=142.1370=r;Ce...=0.0000=r;Hei...=338.5395=r;Wi...=791.4618=r"></cad-section>
<cad-section head="Misc" rows="UC...=Yes;UC...=No;UC...=Yes;UC...= =r;Vis...=2D Wireframe=r"></cad-section>
<div class="info"></div>`);

define('cad-status',`:host{display:flex;align-items:center;box-sizing:border-box;height:13px;flex:none;padding-left:4px;background:#f0f0f0;border-top:1px solid #ccc;font:7px/10px "Liberation Sans",Arial,sans-serif;white-space:nowrap}
.n{width:85px;color:#555}.c{width:104px;height:11px;border:1px solid #aaa;border-bottom-color:#ddd}
nav{display:flex;margin-left:2px}nav button{height:11px;padding:0 1px;border:1px solid #ddd;border-right-color:#999;background:#f0f0f0;line-height:9px}
nav button[aria-pressed=true]{border-color:#777 #ddd #ddd #777;background:#f8f8f8}
.v{display:flex;margin-left:10px}.v button{width:8px;height:11px;padding:0;border:1px solid #ccc;background:none}.v cad-tool{margin:0 3px}
.t{display:flex;gap:1px;margin-left:auto}`,
`<span class="n">''' -. . . - " • ◉ . . ◉ • " - . . . -</span><output class="c">-109.2822, 137.5339, 0.0000</output>
<nav>${'SNAP GRID ORTHO POLAR OSNAP OTRACK DUCS DYN LWT PAPER'.split(' ').map(t=>`<button type="button" aria-pressed="${/OSNAP|OTR|DUCS|PAP/.test(t)}">${t}</button>`).join('')}</nav>
<div class="v"><button aria-label="Previous viewport"><svg width="6" height="9" fill="#888"><path d="M4 2v5L1 4z"/></svg></button><cad-tool name="maxvp"></cad-tool><button aria-label="Next viewport"><svg width="6" height="9" fill="#888"><path d="M2 2v5l3-3z"/></svg></button></div>
<div class="t">${tools('comm unlock trusted arrow screen')}</div>`);

define('site-logo',`:host{position:absolute;right:11px;top:12px;pointer-events:none}text{paint-order:stroke;stroke:#fff;stroke-width:5;stroke-linejoin:round}`,
`<svg width="112" height="52" viewBox="1077 12 112 52"><path d="M1127 17l4 5-12 12v23h-38v3h100v-1h-29V36l-14-14z" fill="#fff" stroke="#fff" stroke-width="6" stroke-linejoin="round"/>
<text x="1081" y="58" font-family="Lato" font-size="18" font-weight="900" fill="#1fc6a1">NH</text><text x="1081" y="38" font-family="Lato" font-size="8" font-weight="900" fill="#454549">BẢN VẼ</text><text x="1152" y="57" font-family="Lato" font-size="19" font-weight="300" fill="#454549">ĐẸP</text>
<path d="M1113 57V37l14-15-3-4 3-3 8 6-16 17v19z" fill="#25c7a2"/><path d="M1119 57V38l17-16 15 15v20zM1124 52h22V39l-10-10-12 11z" fill="#454549" fill-rule="evenodd"/><path d="M1133 33l3-3 6 6v11h-3V38z" fill="#454549"/><path d="M1119 57l5-5M1119 38l5 2M1146 52l5 5" stroke="#77777b"/><path d="M1082 59.500h98" stroke="#32c9aa"/></svg>`);
define('site-mark',`:host{position:absolute;font:bold 21px/24px "Liberation Sans",Arial,sans-serif;color:#c2c2c2;text-shadow:-1px -1px 0 #eee,1px 1px 0 #888;white-space:nowrap;pointer-events:none}`,'<slot></slot>');

define('cad-app',`:host{display:flex;flex-direction:column;min-height:100vh;position:relative;overflow:hidden}
main{display:flex;flex:1;min-height:0}.work{display:flex;flex-direction:column;flex:1;min-width:0;border-right:1px solid #ddd}.top{display:flex;flex:1;min-height:0}.view{display:flex;flex-direction:column;flex:1;min-width:0}
.one{left:446px;bottom:20px}.two{left:800px;bottom:30px}`,
`<cad-title></cad-title><cad-menu></cad-menu><cad-toolbars></cad-toolbars>
<main><div class="work"><div class="top"><cad-strip></cad-strip><div class="view"><cad-drawing></cad-drawing><cad-tabs></cad-tabs></div></div><cad-command></cad-command></div><cad-properties></cad-properties></main>
<cad-status></cad-status><site-logo></site-logo><site-mark class="one">Bản quyền © BanVeNhaDep.vn</site-mark><site-mark class="two">BanVeNhaDep.vn</site-mark>`);
</script>
</body>
</html>
